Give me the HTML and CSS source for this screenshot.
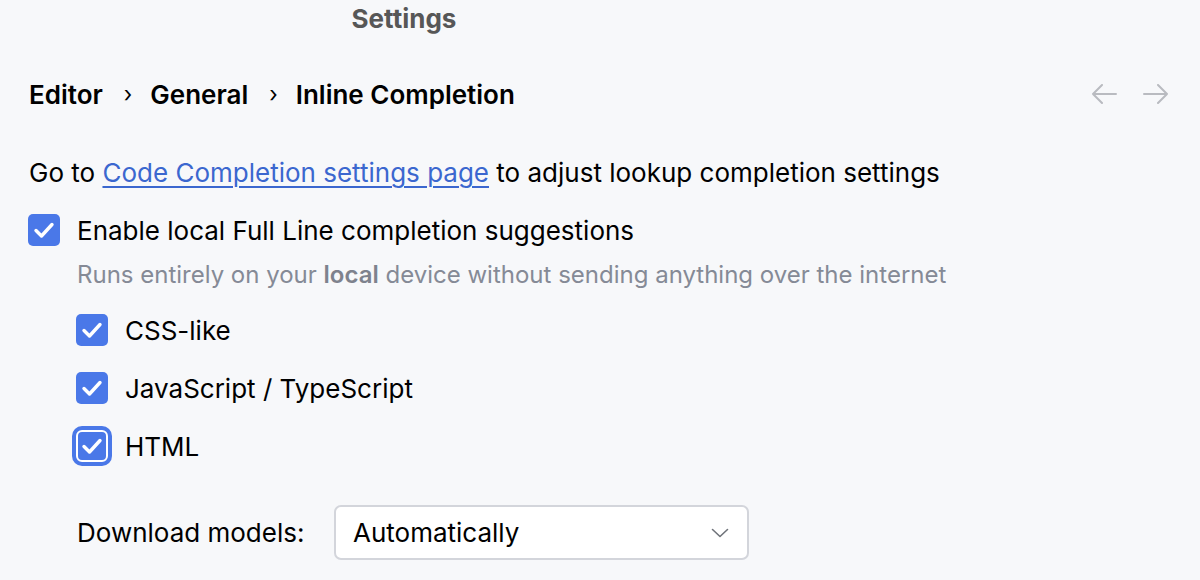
FILE: index.html
```html
<!DOCTYPE html>
<html>
<head>
<meta charset="utf-8">
<link rel="stylesheet" href="styles.css">
</head>
<body>
<div class="page">
  <div class="title">Settings</div>
  <div class="crumbs">
    <div class="path">
      <span>Editor</span><span class="sep">›</span><span>General</span><span class="sep">›</span><span>Inline Completion</span>
    </div>
    <div class="nav">
      <svg width="26" height="20" viewBox="0 0 26 20"><path d="M25 10H2M11 1L2 10L11 19" fill="none" stroke="#b9bbc0" stroke-width="2" stroke-linecap="round" stroke-linejoin="round"/></svg>
      <svg width="26" height="20" viewBox="0 0 26 20"><path d="M1 10H24M15 1L24 10L15 19" fill="none" stroke="#b9bbc0" stroke-width="2" stroke-linecap="round" stroke-linejoin="round"/></svg>
    </div>
  </div>
  <div class="goto">Go to <a class="link">Code Completion settings page</a> to adjust lookup completion settings</div>
  <div class="row main">
    <span class="cb"><svg width="22" height="18" viewBox="0 0 22 18"><path d="M3 9.5L8.5 15L19 3.5" fill="none" stroke="#fff" stroke-width="3.4" stroke-linecap="round" stroke-linejoin="round"/></svg></span>
    <span>Enable local Full Line completion suggestions</span>
  </div>
  <div class="hint">Runs entirely on your <b>local</b> device without sending anything over the internet</div>
  <div class="subs">
    <div class="row">
      <span class="cb"><svg width="22" height="18" viewBox="0 0 22 18"><path d="M3 9.5L8.5 15L19 3.5" fill="none" stroke="#fff" stroke-width="3.4" stroke-linecap="round" stroke-linejoin="round"/></svg></span>
      <span>CSS-like</span>
    </div>
    <div class="row">
      <span class="cb"><svg width="22" height="18" viewBox="0 0 22 18"><path d="M3 9.5L8.5 15L19 3.5" fill="none" stroke="#fff" stroke-width="3.4" stroke-linecap="round" stroke-linejoin="round"/></svg></span>
      <span>JavaScript / TypeScript</span>
    </div>
    <div class="row">
      <span class="cb focus"><svg width="22" height="18" viewBox="0 0 22 18"><path d="M3 9.5L8.5 15L19 3.5" fill="none" stroke="#fff" stroke-width="3.4" stroke-linecap="round" stroke-linejoin="round"/></svg></span>
      <span>HTML</span>
    </div>
  </div>
  <div class="download">
    <span class="label">Download models:</span>
    <div class="select">
      <span>Automatically</span>
      <svg width="18" height="10" viewBox="0 0 18 10"><path d="M1.5 1.5L9 8.5L16.5 1.5" fill="none" stroke="#6f737a" stroke-width="1.6" stroke-linecap="round" stroke-linejoin="round"/></svg>
    </div>
  </div>
</div>
</body>
</html>
```

FILE: styles.css
```css
html, body {
  margin: 0;
  padding: 0;
  background: #f7f8fa;
}
body {
  font-family: Inter, "Noto Sans", sans-serif;
  color: #000;
  width: 1200px;
  height: 580px;
  overflow: hidden;
}
.page {
  display: flex;
  flex-direction: column;
}
.title {
  width: 808px;
  text-align: center;
  font-weight: 700;
  font-size: 26px;
  color: #575757;
  height: 38px;
  line-height: 38px;
}
.crumbs {
  display: flex;
  justify-content: space-between;
  align-items: center;
  padding: 0 31px 0 29px;
  margin-top: 37px;
  height: 38px;
}
.path {
  font-weight: 600;
  font-size: 26px;
  display: flex;
  align-items: center;
}
.sep {
  font-weight: 400;
  margin: 0 18px 0 21px;
  font-size: 22px;
}
.nav {
  display: flex;
  gap: 26px;
}
.goto {
  margin-top: 40px;
  padding-left: 29px;
  font-size: 26px;
  height: 40px;
  line-height: 40px;
}
.link {
  color: #3b67cf;
  text-decoration: underline;
  text-underline-offset: 4px;
  text-decoration-thickness: 1.5px;
}
.row {
  display: flex;
  align-items: center;
  gap: 17px;
  font-size: 26px;
  height: 40px;
}
.main {
  margin-top: 17px;
  padding-left: 28px;
}
.cb {
  width: 32px;
  height: 32px;
  border-radius: 5px;
  background: #4a78e8;
  display: flex;
  align-items: center;
  justify-content: center;
  flex: none;
  box-sizing: border-box;
}
.cb.focus {
  border: 2px solid #fff;
  box-shadow: 0 0 0 4px #4a78e8;
  border-radius: 6px;
}
.hint {
  padding-left: 77px;
  font-size: 24px;
  color: #858a96;
  margin-top: 10px;
  height: 30px;
  line-height: 30px;
}
.hint b {
  font-weight: 600;
  color: #7e828d;
}
.subs {
  display: flex;
  flex-direction: column;
  gap: 18px;
  padding-left: 76px;
  margin-top: 20px;
}
.download {
  display: flex;
  align-items: center;
  padding-left: 77px;
  margin-top: 39px;
  font-size: 26px;
}
.label {
  width: 257px;
}
.select {
  width: 415px;
  height: 55px;
  box-sizing: border-box;
  border: 2px solid #d3d5db;
  border-radius: 7px;
  background: #fff;
  display: flex;
  align-items: center;
  justify-content: space-between;
  padding: 0 18px 0 17px;
}
```
